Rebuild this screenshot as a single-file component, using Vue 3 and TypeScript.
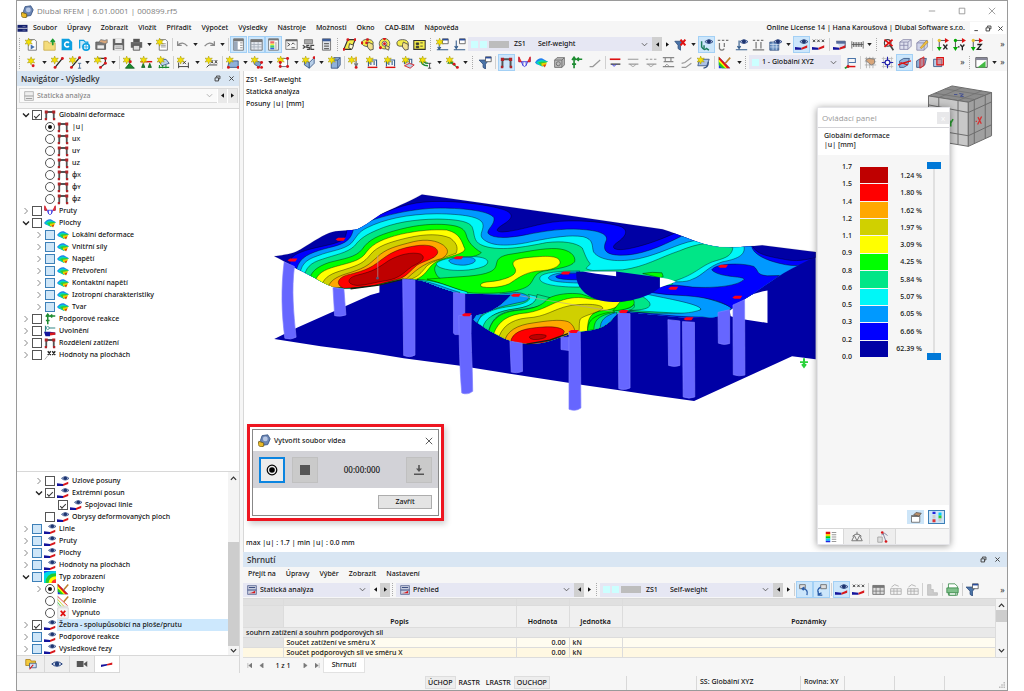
<script setup lang="ts">
import { ref } from 'vue'

interface Combo { label: string; icon?: string; chips?: boolean; code?: string; value: string; off?: string; steps: boolean }
interface Group { w: number; items: string }
interface Node { lv: number; arrow?: 'r' | 'd'; kind: 'check' | 'radio'; on?: boolean; part?: boolean; icon: string; text: string; sub?: string; sel?: boolean }

const star = '<path d="M4.500 0l1.200 3L9 2.500 7 5l2 2.500-3.300-.6L4.500 10 3.300 6.900 0 7.500 2 5 0 2.500 3.300 3z" fill="#f5e100" stroke="#8c8000" stroke-width=".5"/>'
const nodes = (pts: number[][]) => pts.map(([x, y]) => `<circle cx="${x}" cy="${y}" r="1.800" fill="#d8181c"/>`).join('')
const eye = '<path d="M6 4.500Q11 0 16 4.500 11 9 6 4.500z" fill="#b9c6e4" stroke="#24407c"/><circle cx="11" cy="4.300" r="2.400" fill="#1d3470"/>'
const ramp = '<path d="M0 14.500V11l8 1v2.500z" fill="#14149c"/><path d="M8 12l7-3v3l-7 2.500z" fill="#d8181c"/>'
const frame = '<path d="M3 14V4h10v10" fill="none" stroke="#555" stroke-width="2.400"/><path d="M1 2h4v4H1zM11 2h4v4h-4zM1 12h3v3H1zM12 12h3v3h-3z" fill="#b02428"/>'
const win = '<path d="M8 1h7v6H8z" fill="#fff" stroke="#555"/><path d="M8 1h7v2H8z" fill="#2a4d9c"/>'
const doc = '<path d="M4 2h8l2 2v11H4z" fill="#fff" stroke="#666"/>'
const hand = '<path d="M8 8l1-3 6 3v6l-4 1-3-4z" fill="#f3e08a" stroke="#444"/>'

const icons: Record<string, string> = {
  app: '<path d="M5 2l7-1 3 5-3 7-7 1-2-6z" fill="#6c86b5" stroke="#33507f"/><circle cx="9" cy="6" r="3" fill="#b7c7e3"/><path d="M1 9l6 2v4l-4 1-3-3z" fill="#e9b927" stroke="#6c5a1c"/>',
  flag: '<path d="M0 3h16v11H0z" fill="#14206c"/><path d="M0 8.500h16" stroke="#fff" stroke-width="1.200"/><path d="M8 5.500h5M8 11.500h5" stroke="#8890c0" />',
  new: doc + star + '<path d="M7 8l5 3-5 3z" fill="#4470b0"/>',
  open: '<path d="M1 4h5l1 2h8v9H1z" fill="#f4dc7c" stroke="#c9ab4c"/><path d="M12 9V3M9.500 5L12 2l2.500 3" stroke="#1d9b31" stroke-width="2" fill="none"/>',
  cdoc: '<path d="M2 1h9l4 4v10H2z" fill="#0c9fe0"/><path d="M11 6a3 3 0 1 0 0 4" stroke="#fff" stroke-width="2" fill="none"/>',
  cloud: '<path d="M2 13V3h5l2 2h3v3" fill="#c6e9f9" stroke="#0c9fe0" stroke-width="1.500"/><circle cx="10" cy="11" r="4" fill="#fff" stroke="#0c9fe0" stroke-width="2"/><path d="M6 11h8M10 7v8" stroke="#0c9fe0"/>',
  stamp: '<path d="M1 5h12v9H1z" fill="#777" stroke="#555"/><path d="M3 9h8v4H3z" fill="#eee"/><path d="M5 5l2-3 5 1 3-1v4l-3 1z" fill="#d9a679" stroke="#777"/>',
  save: '<path d="M1 1h14v14H1z" fill="#666"/><path d="M4 1h8v5H4zM3 9h10v6H3z" fill="#eee"/><path d="M4 11h8M4 13h8" stroke="#888"/>',
  print: '<path d="M4 1h8v4H4z" fill="#555"/><path d="M1 5h14v7H1z" fill="#666"/><path d="M4 9h8v6H4z" fill="#ddd" stroke="#444"/>',
  docstar: doc + '<path d="M6 7h6M6 9h6M6 11h6" stroke="#888"/>' + star,
  undo: '<path d="M2 4v5h5M2 9q6-6 12 1" fill="none" stroke="#8a8a8a" stroke-width="1.600"/>',
  redo: '<path d="M14 4v5H9M14 9Q8 3 2 10" fill="none" stroke="#8a8a8a" stroke-width="1.600"/>',
  pnl: '<path d="M2 1h12v14H2z" fill="#fff" stroke="#666"/><path d="M2 1h12v3H2z" fill="#777"/><path d="M2 4h5v11H2z" fill="#9aa8ba"/><path d="M10 6h3M10 9h3M10 12h3" stroke="#777"/>',
  tbl: '<path d="M1 2h14v13H1z" fill="#e4e8ee" stroke="#666"/><path d="M1 2h14v3H1z" fill="#777"/><path d="M1 8h14M1 11h14M5 5v10M10 5v10" stroke="#a4acb8"/>',
  leg: '<path d="M2 1h12v14H2z" fill="#fff" stroke="#666"/><path d="M2 1h12v2H2z" fill="#777"/><path d="M4 4h5v3H4z" fill="#e66"/><path d="M4 7h5v2H4z" fill="#ee4"/><path d="M4 9h5v3H4z" fill="#4c6"/><path d="M4 12h5v2H4z" fill="#36d"/><path d="M11 5v9" stroke="#888"/>',
  con: '<path d="M1 2h14v12H1z" fill="#f4f4f4" stroke="#666"/><path d="M1 2h14v2H1z" fill="#666"/><path d="M3 6l3 2-3 2M8 12h4M8 8l2-2 2 2" stroke="#333" fill="none"/>',
  sc: '<path d="M3 2h10v5H3z" fill="#aaa" stroke="#777"/><path d="M1 9l3 2-3 2M9 9H6v2.500h3V14H6M15 9h-4v5h4" stroke="#444" stroke-width="1.500" fill="none"/>',
  calc: '<path d="M3 1h10v14H3z" fill="#dfe3e8" stroke="#666"/><path d="M3 1h10v3H3z" fill="#3c5c98"/><path d="M5 7h6M5 10h6M5 13h6" stroke="#666" stroke-width="1.500"/>',
  y1: '<path d="M6 2h9l-5 12H1z" fill="#f4ec4a" stroke="#333" stroke-width="1.400"/><path d="M8 7l5 2-2 5-4-2z" fill="#fffbd0" stroke="#333"/>' + nodes([[6, 2], [15, 2], [1, 14]]),
  y2: '<ellipse cx="8" cy="6" rx="7" ry="4.500" fill="#f4ec4a" stroke="#444"/>' + nodes([[7, 6], [1, 6], [8, 2]]) + hand,
  y3: '<circle cx="8" cy="7" r="6.500" fill="#f4ec4a" stroke="#555"/><circle cx="8" cy="7" r="3" fill="#fff" stroke="#555"/>' + nodes([[8, 7], [8, 1], [3, 12]]) + '<path d="M9 9l5 2-1 4-4-2z" fill="#f3e08a" stroke="#444"/>',
  y4: '<path d="M1 6q1-4 7-4t7 4v4H4q-3 0-3-4z" fill="#f4ec4a" stroke="#444"/>' + hand,
  y5: '<path d="M1 3h14v11H1z" fill="#f4ec4a" stroke="#333" stroke-width="1.300"/><path d="M4 6h3v2H4zM9 6h3M9 10h3M4 10h3v2H4z" fill="#333" stroke="#333"/>',
  l1: '<path d="M1 14.500h14M4 5v9M2 11l2 3 2-3" stroke="#335c8c" fill="none" stroke-width="1.300"/>' + win + star,
  l2: '<path d="M1 14.500h14M4 3v10M2 10l2 3 2-3" stroke="#335c8c" fill="none" stroke-width="1.300"/>' + win,
  filtx: '<path d="M1 4h11L8 9v6l-3-2V9z" fill="#4a74a8" stroke="#33507f"/><path d="M8 2l6 7M14 2L8 9" stroke="#e01010" stroke-width="2.500"/>',
  filt: '<path d="M0 5h12L8 10v6l-3-2v-4z" fill="#4a74a8" stroke="#33507f"/>' + win,
  ld1: '<path d="M2 4v7q3 5 6 2l3 2M5 9v4" stroke="#1c7c5c" fill="none" stroke-width="1.800"/>' + eye,
  ld2: '<path d="M1 3h3M6 3h3M11 3h3M3 6v7q3 4 6 0M9 6v5" stroke="#777" fill="none" stroke-width="1.500"/>',
  ld3: '<path d="M1 14.500h14M5 3v10M3 10l2 3 2-3" stroke="#335c8c" fill="none" stroke-width="1.400"/>' + eye,
  ld4: '<path d="M1 3h3M6 3h3M11 3h3M1 14.500h14M5 5v8M11 5v8" stroke="#777" fill="none" stroke-width="1.500"/>',
  grid: '<path d="M1 5h11v10H1z" fill="#6b93c4" stroke="#33507f"/><path d="M1 8h11M1 11h11M5 5v10M9 5v10" stroke="#dbe8f6" stroke-width=".8"/>' + eye,
  eye: ramp + eye,
  xxx: '<path d="M1 2l3 3M4 2L1 5M6.500 2l3 3M9.500 2l-3 3M12 2l3 3M15 2l-3 3" stroke="#222"/>' + ramp,
  p1: '<path d="M4 4h11v8H9" fill="#cfdcf3" stroke="#335"/><path d="M4 4h11v3H4z" fill="#556a9a"/>' + ramp,
  p2: '<path d="M1 4v9M15 4v9M1 8h14M3 5v6M5 5v6M7 5v6M9 5v6M11 5v6M13 5v6" stroke="#555"/>',
  zoomx: '<circle cx="7" cy="6" r="4" fill="#fff" stroke="#444" stroke-width="1.500"/><path d="M10 9l4 6" stroke="#444" stroke-width="2"/><path d="M3 2l10 8M13 2L3 11" stroke="#e01010" stroke-width="2.200"/>',
  box: '<path d="M1 5l4-3h10v8l-4 4H1z" fill="#dfe1ef" stroke="#88a"/><path d="M1 5h10v9M11 5l4-3M6 5v9M1 9h10" stroke="#88a" fill="none"/>',
  pencil: '<path d="M1 6l4-3h9v8l-4 4H1z" fill="#cfd3ea" stroke="#88a"/><path d="M1 6h9v9M10 6l4-3" stroke="#88a" fill="none"/><path d="M5 12l8-9 2 2-8 8z" fill="#f0c040" stroke="#a67a10" stroke-width=".6"/>',
  ax: '<path d="M4 3h9M4 3v11" stroke="#333"/><path d="M11 0l5 3-5 3z" fill="#d11"/><path d="M1 11l3 5 3-5z" fill="#0a0"/><circle cx="4" cy="3" r="2" fill="#e8c030"/><path d="M9 8l5 6M14 8l-5 6" stroke="#222" stroke-width="1.600"/>',
  ay: '<path d="M3 3h10M3 3v11" stroke="#333"/><path d="M11 0l5 3-5 3z" fill="#d11"/><path d="M0 11l3 5 3-5z" fill="#0a0"/><circle cx="3" cy="3" r="2" fill="#0a0"/><path d="M6 11h2M9 8l2.500 3L14 8M11.500 11v4" stroke="#222" stroke-width="1.600" fill="none"/>',
  az: '<path d="M4 3h9M4 3v11" stroke="#333"/><path d="M11 0l5 3-5 3z" fill="#d11"/><path d="M1 11l3 5 3-5z" fill="#0a0"/><circle cx="4" cy="3" r="2" fill="#e8c030"/><path d="M9 8h5l-5 6h5" stroke="#222" stroke-width="1.600" fill="none"/>',
  star: '<g transform="translate(3 1)">' + star + '</g>' + nodes([[10, 12]]),
  line: '<path d="M5 14L14 3" stroke="#222" stroke-width="1.600"/>' + star + nodes([[5, 14], [14, 3]]),
  linei: '<path d="M3 14L13 2" stroke="#222" stroke-width="1.600"/><path d="M11 9h4M13 9v6M11 15h4" stroke="#335c8c" fill="none"/>' + star + nodes([[3, 14], [13, 2]]),
  poly: '<path d="M4 3h10v6L8 14" stroke="#333" fill="none" stroke-width="1.500"/>' + star + nodes([[14, 3], [14, 9], [8, 14]]),
  sup1: '<path d="M3 15l5-6 6 6z" fill="#1d8c31" stroke="#0d5c1c"/><path d="M8 3v6" stroke="#1d8c31" stroke-width="2"/>' + star + nodes([[9, 7]]),
  sup2: '<path d="M1 7h14" stroke="#d11" stroke-width="1.800"/><path d="M2 14l2-5 2 5zM10 14l2-5 2 5z" fill="#1d8c31" stroke="#0d5c1c"/>' + star,
  sup3: '<path d="M2 6l9-2 4 5-9 3z" fill="#bcd3ea" stroke="#33507f"/><path d="M2 14h13M3 11v4M7 11v4M11 11v4" stroke="#1d8c31" stroke-width="1.300"/>' + star,
  dim1: '<path d="M2 8v7M14 8v7M2 13h12" stroke="#222"/><path d="M7 6l4 4M11 6l-4 4" stroke="#222"/>' + star,
  dim2: '<path d="M2 14l3-3h10" stroke="#222" fill="none"/><path d="M7 5l3 4M10 5L7 9M12 5l3 4M15 5l-3 4" stroke="#222"/>' + star,
  surf1: '<path d="M4 6h11v8H2z" fill="#8fb1da" stroke="#33507f"/>' + star + nodes([[15, 14], [3, 14]]),
  surf2: '<path d="M3 5l10 3-3 6-6-4z" fill="#7ea2cf" stroke="#33507f"/>' + star + nodes([[13, 8], [9, 14], [13, 14]]),
  surf3: '<path d="M4 3h9v10H4z" fill="#fff" stroke="#556"/>' + star + nodes([[4, 13], [13, 3], [13, 13], [4, 8]]),
  surf4: '<path d="M3 5l6 3v7l-6-4z" fill="#8fb1da" stroke="#33507f"/><path d="M9 8l6-6v7l-6 6z" fill="#b7cfe9" stroke="#33507f"/>' + star + nodes([[15, 2]]),
  surf5: '<path d="M4 5l3-3h8v9l-3 4H4z" fill="#8fb1da" stroke="#33507f"/><path d="M4 5h8v10M12 5l3-3" fill="none" stroke="#33507f"/>' + star,
  fl: '<path d="M10 3v9M8 9l2 4 2-4" stroke="#777" fill="none" stroke-width="1.500"/><path d="M9 1h2v5H9z" fill="#e8b020"/>' + star + nodes([[10, 14]]),
  lm: '<path d="M3 13V5h10v8M6 6v5M10 6v5" stroke="#335c8c" fill="none" stroke-width="1.300"/><path d="M2 14h12" stroke="#d11" stroke-width="1.700"/>' + star,
  ls: '<path d="M3 10V4h9v6M6 5v4M9 5v4" stroke="#335c8c" fill="none" stroke-width="1.300"/><path d="M3 12l6-3 6 2-5 4z" fill="#b7cfe9" stroke="#d11"/>' + star,
  lg: '<path d="M2 3q0 9 9 9M4 3q1 6 7 6" stroke="#1d8c31" fill="none" stroke-width="1.800"/><path d="M11 9h4M13 9v6M11 15h4" stroke="#333" fill="none"/>' + star,
  ld: '<path d="M2 9h7l-3-4z" fill="#1d8c31" stroke="#1d8c31"/><path d="M7 9l7 5" stroke="#1d8c31" stroke-width="1.500"/>' + star + nodes([[10, 10], [14, 14]]),
  frame,
  mom: '<path d="M1 2v5h14V2M4 7q4 12 8 0M6 7v5M10 7v5" stroke="#33d" fill="none"/><path d="M1 1l3 6H1zM15 1l-3 6h3z" fill="#e05050" stroke="#d11"/>',
  surf: '<path d="M0 8Q4 2 9 3l7 4-3 1-4 5-4-2-3-1z" fill="#2080f0"/><path d="M1 8Q6 4 9 5l7 2-3 1-4 5-4-2z" fill="#00d8c0"/><path d="M4 8q5-2 12-1l-3 1-1 5-4-1z" fill="#3c3"/><path d="M8 9l7-1-3 5-4-1z" fill="#e8d000"/><path d="M10 11l4-1-2 4z" fill="#e04010"/>',
  cube: '<path d="M2 5l3-3h9v9l-3 3H2z" fill="#bbb" stroke="#666"/><path d="M2 5h9v9M11 5l3-3" stroke="#666" fill="none"/><circle cx="6.500" cy="9.500" r="2.500" fill="none" stroke="#666"/>',
  react: '<path d="M5 2v13M2.500 5L5 1.500 7.500 5M2.500 10h5M8 4h7M11 2L8.500 4 11 6" stroke="#1d8b31" stroke-width="2" fill="none"/>',
  thin: '<path d="M2 13h4l9-8" stroke="#999" stroke-width="1.500" fill="none"/>',
  r1: '<path d="M1 4h13" stroke="#d11" stroke-width="2"/><path d="M2 10h12" stroke="#333" stroke-width="1.500"/><path d="M4 10q2 5 5 0" stroke="#33d" fill="none"/>',
  r2: '<path d="M1 4h13M2 10h12" stroke="#999" stroke-width="1.500"/><path d="M4 10q3 6 7 0" stroke="#999" fill="none"/>',
  r3: '<path d="M1 4h3M6 4h3M11 4h3M2 10h12" stroke="#999" stroke-width="1.500"/><path d="M4 10q3 6 7 0" stroke="#999" fill="none"/>',
  r4: '<path d="M1 2h14M4 2v5M11 2v5M2 7h12M1 13h14" stroke="#888" stroke-width="1.400"/><path d="M3 13l3-3 3 3" stroke="#888" fill="none"/>',
  r5: '<path d="M2 9l4-1 8-6M2 14h5l7-5" stroke="#999" stroke-width="1.500" fill="none"/>',
  r6: '<path d="M3 4h12l-3 8H1z" fill="#aec3e6" stroke="#33507f"/><path d="M8 15q6-1 6-8" stroke="#33507f" fill="none" stroke-width="1.500"/>' + star,
  iso: '<path d="M1 1v14h14z" fill="#1c3ce0"/><path d="M1 1v10l4 4h5z" fill="#2c2"/><path d="M1 1v6l8 8h3z" fill="#ff0"/><path d="M1 1v3l10 11h4z" fill="#e01818"/><path d="M9 9l6-7" stroke="#b9802c" stroke-width="2"/>',
  isol: '<path d="M1 1v14h14" fill="#f7f7f7" stroke="#ccc"/><path d="M1 2l13 12" stroke="#e01818"/><path d="M1 6l8 9" stroke="#cc0"/><path d="M1 10l4 5" stroke="#2c2"/><path d="M9 9l6-7" stroke="#b9802c" stroke-width="2"/>',
  off: '<path d="M1 1h14v14H1z" fill="#f4f4f4" stroke="#ccc"/><path d="M5 5l6 7M11 5l-6 7" stroke="#e01010" stroke-width="2.500"/>',
  grad: '<path d="M0 0h16v16H0z" fill="#1c50f0"/><path d="M0 3Q4 0 16 0v16H0z" fill="#00d8e8"/><path d="M2 16Q2 3 16 3v13z" fill="#2c3"/><path d="M6 16Q7 7 16 7v9z" fill="#ff0"/><path d="M10 16q1-5 6-5v5z" fill="#f33"/>',
  csys: '<path d="M5 13V3h9v5H6" stroke="#4a74a8" fill="none" stroke-width="1.300"/><path d="M5 13h9" stroke="#d11" stroke-width="1.800"/><path d="M5 13l-4 2" stroke="#1d9b31" stroke-width="2"/>' + nodes([[5, 13]]),
  hand: '<path d="M1 3h14M1 7h14M1 11h14M3 1v14M7 1v14M11 1v14" stroke="#999" stroke-width=".8"/><path d="M2 5l4-2 7 1v5l-4 2-3-2z" fill="#d9a679" stroke="#777"/>',
  snap: '<path d="M1 3h14M1 13h14M3 1v14M13 1v14" stroke="#bbb"/><path d="M8 1v14M1 8h14" stroke="#22a" stroke-width="1.300"/><circle cx="8" cy="8" r="3" fill="#fff" stroke="#22a" stroke-width="1.500"/>',
  w1: '<path d="M2 6l5-3h7l-2 8-5 3H2z" fill="#8fb1da" stroke="#33507f"/><path d="M0 11l8-3 8-2M3 8l9 3" stroke="#d11" stroke-width="1.600"/>',
  w2: '<path d="M2 6l5-3h7l-2 8-5 3H2z" fill="#8fb1da" stroke="#33507f"/><path d="M6 4l5-3v11l-5 3z" fill="#d66" fill-opacity=".6" stroke="#d11"/>',
  w3: '<path d="M2 4h10v9H2z" fill="#b7cfe9" stroke="#33507f"/><path d="M6 2h8v9H6z" fill="#d66" fill-opacity=".5" stroke="#d11" stroke-width="1.400"/>',
  scr: '<path d="M1 2h14v12H1z" fill="#fff" stroke="#333"/><path d="M1 2h14v3H1z" fill="#889"/><path d="M3 14L13 6v8z" fill="#4b4"/>',
  tabl: '<path d="M1 3h14v11H1z" fill="#ddd" stroke="#666"/><path d="M1 3h14v3H1z" fill="#777"/><path d="M1 10h14M5 3v11M10 3v11" stroke="#777"/>',
  tin: '<path d="M2 7h13v7H2z" fill="#f4f4f4" stroke="#aaa"/><path d="M2 10h13M6 7v7M10 7v7M3 5l4-3 5 2" stroke="#aaa" fill="none"/>',
  stairs: '<path d="M2 2v13h12v-3H9V8H6V2z" fill="#ccc" stroke="#bbb"/>',
  prn: '<path d="M3 1h8l3 3v11H3z" fill="#fff" stroke="#3a8a4a"/><path d="M1 6h14v6H1z" fill="#7fc08a" stroke="#3a8a4a"/><path d="M4 12h8v3H4z" fill="#fff" stroke="#3a8a4a"/>',
  u1: '<path d="M2 2h7v5H2z" fill="#ddd" stroke="#666"/><path d="M6 7q7 1 5 8M7 9l-2-2 3-2" stroke="#2a5ca8" fill="none" stroke-width="1.600"/>',
  u2: '<path d="M7 2h7v5H7z" fill="#ddd" stroke="#666"/><path d="M7 5Q1 8 5 14l3-2M4 10v5h5" stroke="#2a5ca8" fill="none" stroke-width="1.600"/>',
  stat: '<path d="M1 1h14v14H1z" fill="#c9cfe0" stroke="#34467c"/><path d="M1 8h14M3 4h10" stroke="#34467c" stroke-width="1.500"/><path d="M3 13l5-1 5-3v4z" fill="#d8181c"/>',
  statg: '<path d="M1 1h14v14H1z" fill="#eee" stroke="#999"/><path d="M1 8h14M3 12h10" stroke="#999" stroke-width="1.500"/>',
  rel: '<path d="M2 1v8M4 4h11" stroke="#388" stroke-width="1.500"/><circle cx="5" cy="4" r="2" fill="#fff" stroke="#388"/><path d="M0 9h8l7 1v3L8 11v4H2z" fill="#14149c"/><path d="M8 10h7v3l-7 1z" fill="#d8181c"/>',
  vals: '<path d="M5 3l4 5M9 3L5 8M11 3l4 5M15 3l-4 5" stroke="#222" stroke-width="1.700"/><path d="M1 14l4-5" stroke="#999"/>',
  tabnav: '<path d="M1 2h6l1 2h6v6H1z" fill="#f3c93c" stroke="#a67a10"/><path d="M6 7h9v6H6z" fill="#cfe0f6" stroke="#33507f"/><path d="M6 15l5-6" stroke="#d11" stroke-width="1.500"/>',
  tabeye: '<path d="M1 8Q8 2 15 8 8 14 1 8z" fill="#dfe6f5" stroke="#24407c" stroke-width="1.300"/><circle cx="8" cy="8" r="3" fill="#24407c"/>',
  tabcam: '<path d="M1 4h9v8H1zM10 8l5-4v8z" fill="#555"/>',
  tabres: '<path d="M0 12V9l8-1v2z" fill="#14149c"/><path d="M8 8l7-2v3l-7 1z" fill="#d8181c"/>',
  list: '<path d="M1 1h6v3H1z" fill="#d11"/><path d="M1 4h6v3H1z" fill="#fc0"/><path d="M1 7h6v3H1z" fill="#0c0"/><path d="M1 10h6v3H1z" fill="#0cf"/><path d="M1 13h6v2H1z" fill="#22d"/><path d="M9 2h6M9 5h6M9 8h6M9 11h6M9 14h6" stroke="#999" stroke-width="1.600"/>',
  scale: '<path d="M8 1v4M2 7q6-6 12 0M4.500 6L1 13h7zM11.500 6L8 13h7z" fill="none" stroke="#777" stroke-width="1.300"/>',
  coef: '<path d="M1 8h6v7H1z" fill="#ddd" stroke="#999"/><path d="M8 3l4 11M6 5l4-2 4 3" stroke="#668" fill="none"/>' + nodes([[7, 2], [12, 14]]),
  pal1: '<path d="M2 6h11v9H2z" fill="#fff" stroke="#555"/><path d="M2 6h11v2H2z" fill="#777"/><path d="M5 5l3-3 7 1-3 4z" fill="#b98f6a" stroke="#555"/>',
  pal2: '<path d="M2 1h4v3H2z" fill="#22d"/><path d="M2 5h4v5H2z" fill="#ccc"/><path d="M2 11h4v4H2z" fill="#d33"/><path d="M10 2h4v4h-4z" fill="#0cf"/><path d="M10 6h4v4h-4z" fill="#3c3"/><path d="M10 10h4v4h-4z" fill="#ccc"/>',
}

const menus = ['Soubor', 'Úpravy', 'Zobrazit', 'Vložit', 'Přiřadit', 'Výpočet', 'Výsledky', 'Nástroje', 'Možnosti', 'Okno', 'CAD-BIM', 'Nápověda']
const subMenus = ['Přejít na', 'Úpravy', 'Výběr', 'Zobrazit', 'Nastavení']

const combos: Record<string, Combo> = {
  load: { label: 'Zatěžovací stav', chips: true, code: 'ZS1', value: 'Self-weight', off: 'prev', steps: true },
  cs: { label: 'Souřadný systém', chips: true, value: '1 - Globální XYZ', steps: false },
  stat: { label: 'Typ analýzy', icon: 'stat', value: 'Statická analýza', off: 'next', steps: true },
  view: { label: 'Tabulka', icon: 'stat', value: 'Přehled', off: 'prev', steps: true },
}

const bars: Record<string, Group[]> = {
  one: [
    { w: 157, items: ': new open cdoc cloud stamp save print v docstar |' },
    { w: 56, items: 'undo v redo v |' },
    { w: 105, items: '*pnl *tbl *leg con sc calc' },
    { w: 93, items: ': y1 y2 y3 y4 y5' },
    { w: 244, items: ': l1 l2 @load' },
    { w: 202, items: 'filtx v *ld1 ld2 ld3 ld4 grid v *eye xxx | p1 p2 v' },
    { w: 133, items: ': zoomx box pencil | ax ay az »' },
  ],
  two: [
    { w: 104, items: ': star v line linei v poly v |' },
    { w: 54, items: 'sup1 sup2 sup3 |' },
    { w: 49, items: 'dim1 v dim2 |' },
    { w: 122, items: 'surf1 v surf2 v surf3 v surf4 v surf5 |' },
    { w: 124, items: 'fl lm lm ls lg v ld v' },
    { w: 246, items: ': filt | *frame mom surf cube react thin | r1 r2 r3 r4 r5 r6 |' },
    { w: 27, items: 'iso v' },
    { w: 119, items: ': @cs csys |' },
    { w: 105, items: 'hand snap *w1 w2 w3 »' },
    { w: 40, items: ': scr v »' },
  ],
  sum: [
    { w: 147, items: '@stat' },
    { w: 204, items: ': @view' },
    { w: 202, items: ': @load |' },
    { w: 211, items: '*u1 *u2 | *eye xxx | tabl tin tin | stairs | prn | filt »' },
  ],
}

const kids = ['Lokální deformace', 'Vnitřní síly', 'Napětí', 'Přetvoření', 'Kontaktní napětí', 'Izotropní charakteristiky', 'Tvar']
const comps: string[][] = [['|u|', ''], ['u', 'X'], ['u', 'Y'], ['u', 'Z'], ['φ', 'X'], ['φ', 'Y'], ['φ', 'Z']]
const upper: Node[] = [
  { lv: 0, arrow: 'd', kind: 'check', on: true, icon: 'frame', text: 'Globální deformace' },
  ...comps.map(([text, sub], i): Node => ({ lv: 1, kind: 'radio', on: i === 0, icon: 'frame', text, sub })),
  { lv: 0, arrow: 'r', kind: 'check', icon: 'mom', text: 'Pruty' },
  { lv: 0, arrow: 'd', kind: 'check', icon: 'surf', text: 'Plochy' },
  ...kids.map((text): Node => ({ lv: 1, arrow: 'r', kind: 'check', part: true, icon: 'surf', text })),
  { lv: 0, arrow: 'r', kind: 'check', icon: 'react', text: 'Podporové reakce' },
  { lv: 0, arrow: 'r', kind: 'check', icon: 'rel', text: 'Uvolnění' },
  { lv: 0, arrow: 'r', kind: 'check', icon: 'frame', text: 'Rozdělení zatížení' },
  { lv: 0, arrow: 'r', kind: 'check', icon: 'vals', text: 'Hodnoty na plochách' },
]
const lower: Node[] = [
  { lv: 1, arrow: 'r', kind: 'check', icon: 'eye', text: 'Uzlové posuny' },
  { lv: 1, arrow: 'd', kind: 'check', on: true, icon: 'eye', text: 'Extrémní posun' },
  { lv: 2, kind: 'check', on: true, icon: 'eye', text: 'Spojovací linie' },
  { lv: 1, kind: 'check', icon: 'eye', text: 'Obrysy deformovaných ploch' },
  { lv: 0, arrow: 'r', kind: 'check', part: true, icon: 'eye', text: 'Linie' },
  { lv: 0, arrow: 'r', kind: 'check', part: true, icon: 'eye', text: 'Pruty' },
  { lv: 0, arrow: 'r', kind: 'check', part: true, icon: 'eye', text: 'Plochy' },
  { lv: 0, arrow: 'r', kind: 'check', part: true, icon: 'eye', text: 'Hodnoty na plochách' },
  { lv: 0, arrow: 'd', kind: 'check', part: true, icon: 'grad', text: 'Typ zobrazení' },
  { lv: 1, arrow: 'r', kind: 'radio', on: true, icon: 'iso', text: 'Izoplochy' },
  { lv: 1, kind: 'radio', icon: 'isol', text: 'Izolinie' },
  { lv: 1, kind: 'radio', icon: 'off', text: 'Vypnuto' },
  { lv: 0, arrow: 'r', kind: 'check', on: true, icon: 'eye', text: 'Žebra - spolupůsobící na ploše/prutu', sel: true },
  { lv: 0, arrow: 'r', kind: 'check', part: true, icon: 'eye', text: 'Podporové reakce' },
  { lv: 0, arrow: 'r', kind: 'check', part: true, icon: 'eye', text: 'Výsledkové řezy' },
]
const trees = ref([upper, lower])
const navTabs = ['tabnav', 'tabeye', 'tabcam', 'tabres']

const stops = ['1.7', '1.5', '1.4', '1.2', '1.1', '0.9', '0.8', '0.6', '0.5', '0.3', '0.2', '0.0']
const scale: [string, string][] = [
  ['#bf0000', '1.24 %'], ['#ff0000', '1.80 %'], ['#ffa800', '1.62 %'], ['#d0d000', '1.97 %'], ['#ffff00', '3.09 %'], ['#00ff00', '4.25 %'],
  ['#00e687', '5.84 %'], ['#00f7f7', '5.07 %'], ['#0099ff', '6.05 %'], ['#0000ff', '6.66 %'], ['#0000a5', '62.39 %'],
]

const N = '#0000a5', B = '#0000ff', A = '#0099ff', C = '#00f7f7', T = '#00e687', G = '#00ff00', Y = '#ffff00', O = '#d0d000', R = '#ffa800', D = '#ff0000', K = '#bf0000'

const roof = 'M40 231C80 226 100 222 120 210C160 185 190 165 215 158C240 152 270 155 290 150C320 135 345 115 360 105C400 85 440 70 485 45L870 100L1210 150C1260 165 1310 190 1350 198C1400 210 1460 202 1510 198L1671 218L1671 235L1655 240L1600 268C1540 300 1500 335 1460 358C1430 380 1400 405 1370 414C1320 424 1200 410 1090 397C1070 400 1060 425 1040 437C1015 455 980 455 960 459C930 462 890 482 850 492C800 500 770 492 750 485C710 470 670 445 640 422L650 409C700 400 730 375 755 346L620 344C570 340 530 320 490 306Q460 299 430 298L355 318L270 329C220 332 190 312 165 298C140 285 115 272 95 262C75 250 60 240 40 231Z'

const bands: [string, string][] = [
  [B, 'M88 262C84 240 96 228 118 220C160 202 210 200 240 185C256 178 258 165 260 140L360 105C420 78 470 65 540 66C620 66 700 80 735 92C765 105 755 118 735 132C712 146 700 157 728 158C780 155 840 130 900 126C970 121 1050 130 1085 142C1112 155 1095 175 1070 192C1050 208 1070 216 1110 208C1170 195 1210 178 1250 160L1400 180L1480 198C1490 226 1530 232 1580 241C1610 248 1640 242 1670 236L1500 520L88 520Z'],
  [A, 'M104 300C104 250 125 232 160 219C200 203 240 202 262 182C274 170 276 160 280 145L320 128C370 108 460 86 540 86C620 86 690 96 702 115C706 135 680 150 684 162C700 180 750 176 800 166C860 154 910 147 960 150C1020 153 1045 165 1041 182C1030 205 1030 226 1080 228C1140 230 1200 204 1268 170L1478 200C1482 225 1520 242 1560 252C1590 260 1610 260 1634 258L1500 520L104 520Z'],
  [C, 'M116 300C118 255 135 242 170 230C210 214 250 212 272 192C290 172 290 160 320 145C370 120 440 104 530 103C610 104 660 112 668 132C674 150 655 165 668 178C695 205 760 200 820 186C880 174 930 166 970 172C1004 180 996 200 1002 218C1020 245 1080 250 1140 238C1210 222 1250 195 1305 184L1455 200C1462 230 1430 240 1390 248C1345 262 1330 290 1300 300C1280 312 1240 308 1200 305L1100 520L116 520Z'],
  [T, 'M130 300C132 266 150 250 185 240C225 226 258 222 282 200C300 176 320 165 350 152C400 130 460 120 530 119C600 120 634 128 638 148C644 165 640 185 662 196C710 220 800 202 860 190C910 184 950 190 968 206C975 222 980 240 992 254C985 266 965 268 1000 274L1090 272C1160 262 1200 235 1260 215C1320 190 1350 192 1370 190L1422 205C1418 235 1390 238 1360 248C1320 264 1310 285 1245 306L1100 520L130 520Z'],
  [G, 'M147 300C150 278 170 262 205 250C250 238 285 235 305 210C325 180 355 168 400 155C460 138 500 134 545 135C600 138 612 148 618 165C624 190 640 205 664 220C650 236 600 236 555 242C525 252 520 265 525 278C532 298 545 302 560 306L500 320L147 330Z'],
  [G, 'M540 297C600 292 660 292 690 278C726 262 690 238 745 226C800 218 850 206 890 208C930 210 950 230 945 248C935 262 900 268 850 276C820 285 825 300 808 318C780 342 700 344 640 342C600 340 570 318 500 300Z'],
  [Y, 'M162 310C170 282 190 272 225 262C275 248 300 245 318 218C340 190 370 178 420 165C480 152 520 150 560 152C600 162 604 185 614 208C616 222 580 228 545 240C500 256 510 280 470 300L162 330Z'],
  [O, 'M183 320C190 292 215 282 250 272C300 256 310 250 330 226C350 200 390 188 440 176C500 162 540 164 570 176C596 195 592 212 588 222C560 232 520 245 500 260C480 285 475 290 455 299L183 330Z'],
  [R, 'M202 325C210 300 235 290 270 280C320 264 325 255 350 234C375 208 410 200 460 187C500 178 530 184 550 198C572 216 560 228 545 238C500 248 475 265 440 298L202 330Z'],
  [D, 'M250 328C220 315 232 292 270 285C330 270 340 258 365 240C400 212 440 202 480 198C520 195 536 210 532 222C525 240 490 245 470 258C450 275 440 290 420 298L330 322Z'],
  [K, 'M290 319C256 316 258 296 290 288C340 276 350 268 385 244C420 224 455 218 480 224C502 236 480 250 455 262C425 284 420 296 380 304C340 310 320 318 290 319Z'],
  [Y, 'M663 322C656 306 690 310 720 303C762 292 776 280 762 262C750 240 780 236 840 232C890 229 902 238 901 252C892 270 860 274 830 276C790 282 770 300 748 314C720 326 680 328 663 322Z'],
  [C, 'M528 254C540 236 600 232 640 232C690 234 692 252 670 262C635 276 580 276 556 270C540 266 530 262 528 254Z'],
  [A, 'M566 243C580 234 620 232 638 236C656 244 640 256 610 258C585 258 566 252 566 243Z'],
  [C, 'M470 300C540 306 560 322 620 338L625 346L560 342Z'],
  [A, 'M470 302C530 312 550 326 600 340L560 344Z'],
  [C, 'M840 300C838 284 870 276 960 275L960 324C900 324 845 318 840 300Z'],
  [A, 'M866 296C872 282 920 278 960 278L960 312C910 310 868 308 866 296Z'],
  [B, 'M888 292C894 284 930 282 960 282L960 302C920 302 890 300 888 292Z'],
  [A, 'M640 428L640 400L720 345L770 340C812 345 816 360 790 368C750 376 690 390 664 408L652 432Z'],
  [C, 'M652 436C656 404 700 390 745 383C800 375 820 362 805 346L832 352C830 380 790 386 750 392C700 400 680 420 672 446Z'],
  [T, 'M668 448C674 415 706 402 750 392C800 386 830 376 832 346L872 356C855 388 800 388 750 396C706 405 694 430 686 456Z'],
  [G, 'M684 470C690 425 715 402 765 395C830 390 850 376 865 358C890 345 930 340 965 345L1040 370L1120 362C1136 380 1110 392 1065 394L1060 440L960 470L684 480Z'],
  [Y, 'M697 480C705 440 730 412 780 404C840 400 860 380 900 366C930 355 960 352 990 360L1085 366C1085 384 1050 394 1020 396C985 404 984 430 984 460L700 500Z'],
  [O, 'M714 485C722 446 752 422 800 417C860 414 880 390 930 380C980 372 1030 376 1030 388C1015 402 975 408 962 420C955 440 965 455 950 470L714 500Z'],
  [R, 'M733 490C740 456 772 438 820 432C860 426 900 420 925 428C945 438 945 455 950 470L733 500Z'],
  [D, 'M752 490C756 462 785 450 830 446C880 440 910 446 914 458C910 480 870 484 830 500L752 500Z'],
  [K, 'M809 474C811 467 840 464 858 469C866 476 840 483 822 482C813 480 808 478 809 474Z'],
  [G, 'M984 455C986 425 998 408 1060 398L1064 445Z'],
  [T, 'M1003 455C1003 425 1015 410 1064 400L1066 440Z'],
  [A, 'M1022 450C1022 425 1035 410 1072 400L1066 440Z'],
  [T, 'M1110 362C1150 335 1180 335 1200 338C1250 345 1330 360 1360 395L1300 412L1090 398C1130 392 1135 380 1110 362Z'],
  [G, 'M1082 368L1122 362C1134 384 1100 392 1060 396Z'],
  [C, 'M1145 350C1190 330 1260 358 1300 370C1340 385 1330 404 1280 404L1110 394C1180 394 1190 375 1145 350Z'],
  [A, 'M1165 338C1220 325 1340 350 1420 385L1380 420L1300 424L1105 402C1220 400 1280 410 1325 392C1330 376 1220 358 1165 346Z'],
  [B, 'M1175 336C1220 310 1250 318 1300 324C1370 328 1440 320 1456 300C1450 290 1380 296 1358 272C1370 252 1450 250 1485 262C1502 276 1490 286 1525 290L1562 289L1500 345L1422 392C1400 370 1350 355 1280 350Q1220 348 1175 340Z'],
  [B, 'M1085 396C1180 402 1240 415 1330 414L1370 420L1085 420Z'],
  [G, 'M1150 283Q1180 277 1208 281L1212 292L1202 296Z'],
]

const pillars = [
  'M70 248C60 330 62 400 72 478Q90 484 106 475C98 400 92 330 101 262Z',
  'M217 325L250 330L256 408Q240 414 222 410Z', 'M427 300L464 303L464 529Q448 538 430 530Z',
  'M580 340L614 344L614 467L584 467L580 462Z', 'M596 410L634 408C630 480 638 560 638 638Q622 650 605 643C598 560 598 500 596 410Z',
  'M750 487L787 493L788 578Q770 585 754 580Z', 'M904 475L928 475L928 515L904 512Z', 'M928 458L962 458L964 688Q948 700 928 692Z',
  'M1076 402L1112 404L1112 628Q1096 636 1078 630Z', 'M1226 422L1262 426L1262 560Q1246 566 1228 560Z',
  'M1270 428L1306 430L1307 655Q1290 662 1272 655Z', 'M1377 400L1412 392L1412 494Q1396 500 1378 493Z', 'M1422 378L1457 362L1458 589Q1440 594 1423 588Z',
]
const pins = [[95, 243], [240, 180], [595, 236], [768, 349], [620, 408], [918, 282], [1392, 262], [1242, 328], [1435, 355], [1288, 420], [1092, 398], [942, 458]]

const rows = [['Součet zatížení ve směru X', '0.00', 'kN'], ['Součet podporových sil ve směru X', '0.00', 'kN']]
const toggles: [string, boolean][] = [['ÚCHOP', true], ['RASTR', false], ['LRASTR', false], ['OUCHOP', true]]
const split = (s: string) => s.split(' ')
const bare = (s: string) => s.replace('*', '')
</script>

<template>
  <div class="window">
    <header class="title">
      <svg class="ic" viewBox="0 0 16 16" v-html="icons.app" />
      <span class="name">Dlubal RFEM | 6.01.0001 | 000899.rf5</span>
      <button class="cap" aria-label="Minimalizovat"><svg viewBox="0 0 10 10"><path d="M1 5h8" /></svg></button>
      <button class="cap" aria-label="Maximalizovat"><svg viewBox="0 0 10 10"><path d="M1.500 1.500h7v7h-7z" /></svg></button>
      <button class="cap" aria-label="Zavřít okno"><svg viewBox="0 0 10 10"><path d="M1 1l8 8M9 1L1 9" /></svg></button>
    </header>
    <nav class="menu main">
      <svg class="flag" viewBox="0 0 16 16" v-html="icons.flag" />
      <button v-for="m in menus" :key="m">{{ m }}</button>
      <span class="lic">Online License 14 | Hana Karoušová | Dlubal Software s.r.o.</span>
      <button class="mdi" aria-label="Minimalizovat dokument"><svg viewBox="0 0 10 10"><path d="M2 8h5" /></svg></button>
      <button class="mdi" aria-label="Obnovit dokument"><svg viewBox="0 0 10 10"><path d="M3.500 3V1.500h5v4H7M1.500 4h5v4.500h-5z" /></svg></button>
      <button class="mdi" aria-label="Zavřít dokument"><svg viewBox="0 0 10 10"><path d="M2 2l6 6M8 2L2 8" /></svg></button>
    </nav>

    <div class="body">
      <template v-for="(bar, key) in bars" :key="key">
        <div class="bar" :class="'bar-' + key" role="toolbar">
          <div v-for="(g, gi) in bar" :key="gi" class="grp" :style="{ flexGrow: g.w }">
            <template v-for="(it, i) in split(g.items)" :key="i">
              <i v-if="it === ':'" class="grip" />
              <i v-else-if="it === '|'" class="sep" />
              <button v-else-if="it === 'v'" class="caret" aria-label="Další volby"><svg viewBox="0 0 6 4"><path d="M0 0h6L3 4z" /></svg></button>
              <button v-else-if="it === '»'" class="more" aria-label="Více">»</button>
              <div v-else-if="it[0] === '@'" class="combo" :class="{ single: it === '@cs' }">
                <svg v-if="combos[it.slice(1)].icon" class="ic" viewBox="0 0 16 16" v-html="icons.stat" />
                <template v-if="combos[it.slice(1)].chips"><i class="chip" /><i class="chip b" /><i class="chip g" /></template>
                <span v-if="combos[it.slice(1)].code" class="code">{{ combos[it.slice(1)].code }}</span>
                <select :aria-label="combos[it.slice(1)].label"><option>{{ combos[it.slice(1)].value }}</option></select>
                <svg class="chev" viewBox="0 0 8 5"><path d="M1 1l3 3 3-3" /></svg>
                <template v-if="combos[it.slice(1)].steps">
                  <button class="step" :class="{ off: combos[it.slice(1)].off === 'prev' }" aria-label="Předchozí"><svg viewBox="0 0 4 6"><path d="M4 0v6L0 3z" /></svg></button>
                  <button class="step" :class="{ off: combos[it.slice(1)].off === 'next' }" aria-label="Další"><svg viewBox="0 0 4 6"><path d="M0 0v6l4-3z" /></svg></button>
                </template>
              </div>
              <button v-else class="tb" :class="{ on: it[0] === '*' }" :aria-label="bare(it)"><svg class="ic" viewBox="0 0 16 16" v-html="icons[bare(it)]" /></button>
            </template>
          </div>
        </div>
      </template>

      <aside class="nav">
        <div class="dock">
          <h2>Navigátor - Výsledky</h2>
          <button aria-label="Uvolnit navigátor"><svg viewBox="0 0 10 10"><path d="M3.500 3V1.500h5v4H7M1.500 4h5v4.500h-5z" /></svg></button>
          <button aria-label="Zavřít navigátor"><svg viewBox="0 0 10 10"><path d="M2 2l6 6M8 2L2 8" /></svg></button>
        </div>
        <div class="navsel">
          <div class="combo gray">
            <svg class="ic" viewBox="0 0 16 16" v-html="icons.statg" />
            <select aria-label="Analýza navigátoru" disabled><option>Statická analýza</option></select>
            <svg class="chev" viewBox="0 0 8 5"><path d="M1 1l3 3 3-3" /></svg>
            <button class="step off" aria-label="Předchozí analýza"><svg viewBox="0 0 4 6"><path d="M4 0v6L0 3z" /></svg></button>
            <button class="step off" aria-label="Další analýza"><svg viewBox="0 0 4 6"><path d="M0 0v6l4-3z" /></svg></button>
          </div>
        </div>
        <div v-for="(tree, t) in trees" :key="t" class="tree" :class="t ? 'low' : 'up'">
          <ul>
            <li v-for="(n, i) in tree" :key="i" :class="['lv' + n.lv, { sel: n.sel }]">
              <span class="arr"><svg v-if="n.arrow" viewBox="0 0 8 8" :class="n.arrow"><path :d="n.arrow === 'd' ? 'M1 2.500l3 3 3-3' : 'M2.500 1l3 3-3 3'" /></svg></span>
              <label>
                <input v-if="n.kind === 'check'" type="checkbox" :checked="n.on" :class="{ part: n.part }" />
                <input v-else type="radio" :name="'tree' + t" :checked="n.on" />
                <svg class="ti" viewBox="0 0 16 16" v-html="icons[n.icon]" />
                <span>{{ n.text }}<small v-if="n.sub">{{ n.sub }}</small></span>
              </label>
            </li>
          </ul>
          <div v-if="t" class="vscroll"><svg viewBox="0 0 8 5"><path d="M1 4l3-3 3 3" /></svg><i /><svg viewBox="0 0 8 5"><path d="M1 1l3 3 3-3" /></svg></div>
        </div>
        <div class="navtabs">
          <button v-for="(n, i) in navTabs" :key="n" :class="{ on: i === 3 }" :aria-label="'Karta ' + (i + 1)"><svg class="ic" viewBox="0 0 16 16" v-html="icons[n]" /></button>
        </div>
      </aside>

      <main class="view">
        <svg class="scene" viewBox="243 71 764 483" preserveAspectRatio="xMinYMin meet">
          <defs><clipPath id="roof"><path :d="roof" /></clipPath></defs>
          <g transform="translate(260 180) scale(.33333)">
            <path :fill="N" d="M40 480L110 446L330 348L357 340L357 310L600 200L1671 218L1671 541L1600 532L1305 667L1180 650L1090 636L965 618L750 585L595 560L430 538L320 520L180 502Z" />
            <path fill="#fff" d="M1421 414L1421 380L1460 356Q1490 340 1526 334L1526 432L1462 422ZM1412 395L1422 388L1422 413L1415 412Z" />
            <path d="M430 302L620 200L1650 240L1460 358L1370 414L1090 397L640 422Z" :fill="N" />
            <path :d="roof" :fill="N" />
            <g clip-path="url(#roof)" stroke="#000" stroke-opacity=".6" stroke-width="2">
              <path v-for="(b, i) in bands" :key="i" :fill="b[0]" :d="b[1]" />
            </g>
            <path :fill="N" d="M950 278C945 330 990 368 1060 369C1130 368 1180 345 1202 325L1202 295L1070 277Z" />
            <path fill="#fff" d="M970 277L1070 277L1070 291L1010 284ZM1202 295Q1230 298 1250 308L1202 325Z" />
            <path :d="roof" fill="none" stroke="#223" stroke-opacity=".4" stroke-width="1" />
            <path d="M270 329L355 318L430 300M800 496L870 484L925 464" fill="none" stroke="#132013" stroke-width="4" />
            <path v-for="(p, i) in pillars" :key="i" :d="p" fill="#6666ff" stroke="#8080ff" stroke-width="2" />
            <path v-for="(p, i) in pins" :key="i" :d="`M${p[0] - 15} ${p[1]}l8-5h22l-6 9h-18z`" fill="#ff0018" />
            <path d="M352 228V297M780 350L1060 397" stroke="#b8a0a0" stroke-width="2" />
            <circle cx="351" cy="297" r="4" fill="#557" />
            <path d="M1636 538v26M1624 550h24M1630 556l6 8 6-8" stroke="#2bd13b" stroke-width="6" fill="none" />
          </g>
          <g transform="translate(800 80) scale(.33333)" stroke="#6c6c6c" stroke-width="3">
            <path fill="#8c8c8c" d="M391 48L462 18L581 38L511 67Z" />
            <path fill="#c8c8c8" d="M391 48L511 67L511 200L391 180Z" />
            <path fill="#a0a0a0" d="M511 67L581 38L581 168L511 200Z" />
            <path fill="none" d="M391 75L511 98L581 66M391 148L511 168L581 135M422 53V185M480 62V194M529 60V192M562 46V176" />
            <path fill="none" stroke-width="2" d="M410 40L530 59M440 27L560 46M422 53L492 23M480 62L551 33" />
            <path d="M452 118l6 12 7-12M458 130v10" stroke="#2b9b31" stroke-width="5" fill="none" />
            <path d="M540 112l10 20M551 110l-12 24M533 125h4" stroke="#d83030" stroke-width="4" fill="none" />
            <path d="M468 44h10M484 41l12 2-9 6 10 1" stroke="#445090" fill="none" />
          </g>
        </svg>
        <div class="info"><p>ZS1 - Self-weight</p><p>Statická analýza</p><p>Posuny |u| [mm]</p></div>
        <p class="minmax">max |u| : 1.7 | min |u| : 0.0 mm</p>

        <section class="video" role="dialog" aria-label="Vytvořit soubor videa">
          <div class="vbox">
            <div class="vhead"><svg class="ic" viewBox="0 0 16 16" v-html="icons.app" /><span>Vytvořit soubor videa</span><button aria-label="Zavřít dialog"><svg viewBox="0 0 10 10"><path d="M1 1l8 8M9 1L1 9" /></svg></button></div>
            <div class="vmid">
              <button class="rec" aria-label="Nahrávat"><svg viewBox="0 0 12 12"><circle cx="6" cy="6" r="4.800" fill="none" stroke="#000" stroke-width="1.200" /><circle cx="6" cy="6" r="2.800" /></svg></button>
              <button aria-label="Zastavit"><svg viewBox="0 0 12 12"><path fill="#555" d="M1 1h10v10H1z" /></svg></button>
              <time>00:00:000</time>
              <button aria-label="Uložit video"><svg viewBox="0 0 12 12"><path fill="#555" d="M5.200 1h1.600v3.500H9L6 8 3 4.500h2.200zM1 9.500h10V11H1z" /></svg></button>
            </div>
            <div class="vfoot"><button>Zavřít</button></div>
          </div>
        </section>

        <section class="panel">
          <div class="phead"><span>Ovládací panel</span><button aria-label="Zavřít panel">x</button></div>
          <div class="pname">Globální deformace<br />|u| [mm]</div>
          <div class="pscale">
            <div class="stops"><span v-for="s in stops" :key="s">{{ s }}</span></div>
            <div class="cols"><i v-for="s in scale" :key="s[0]" :style="{ background: s[0] }" /></div>
            <div class="pcts"><span v-for="s in scale" :key="s[0]">{{ s[1] }}</span></div>
            <div class="slide"><i /><i /></div>
          </div>
          <div class="pbtns"><button aria-label="Upravit paletu"><svg class="ic" viewBox="0 0 16 16" v-html="icons.pal1" /></button><button class="on" aria-label="Zobrazit stupnici"><svg class="ic" viewBox="0 0 16 16" v-html="icons.pal2" /></button></div>
          <div class="ptabs">
            <button class="on" aria-label="Barvy"><svg class="ic" viewBox="0 0 16 16" v-html="icons.list" /></button>
            <button aria-label="Součinitele"><svg class="ic" viewBox="0 0 16 16" v-html="icons.scale" /></button>
            <button aria-label="Filtr"><svg class="ic" viewBox="0 0 16 16" v-html="icons.coef" /></button>
          </div>
        </section>
      </main>

      <div class="dock sumhead">
        <h2>Shrnutí</h2>
        <button aria-label="Uvolnit shrnutí"><svg viewBox="0 0 10 10"><path d="M3.500 3V1.500h5v4H7M1.500 4h5v4.500h-5z" /></svg></button>
        <button aria-label="Zavřít shrnutí"><svg viewBox="0 0 10 10"><path d="M2 2l6 6M8 2L2 8" /></svg></button>
      </div>
      <nav class="menu sub"><button v-for="m in subMenus" :key="m">{{ m }}</button></nav>
      <div class="grid">
        <table>
          <colgroup><col class="c0" /><col class="c1" /><col class="c2" /><col class="c3" /><col /></colgroup>
          <thead>
            <tr class="strip"><td v-for="n in 5" :key="n" /></tr>
            <tr class="heads"><td /><th>Popis</th><th>Hodnota</th><th>Jednotka</th><th>Poznámky</th></tr>
          </thead>
          <tbody>
            <tr class="group"><td colspan="5">souhrn zatížení a souhrn podporových sil</td></tr>
            <tr v-for="r in rows" :key="r[0]"><td /><td>{{ r[0] }}</td><td class="num">{{ r[1] }}</td><td>{{ r[2] }}</td><td /></tr>
          </tbody>
        </table>
        <div class="vscroll short"><svg viewBox="0 0 8 5"><path d="M1 4l3-3 3 3" /></svg><i /><svg viewBox="0 0 8 5"><path d="M1 1l3 3 3-3" /></svg></div>
      </div>
      <div class="pager">
        <button aria-label="První"><svg viewBox="0 0 6 6"><path d="M1 0v6M6 0v6L2 3z" /></svg></button>
        <button aria-label="Zpět"><svg viewBox="0 0 6 6"><path d="M5 0v6L1 3z" /></svg></button>
        <span>1 z 1</span>
        <button aria-label="Vpřed"><svg viewBox="0 0 6 6"><path d="M1 0v6l4-3z" /></svg></button>
        <button aria-label="Poslední"><svg viewBox="0 0 6 6"><path d="M0 0v6l4-3zM5 0v6" /></svg></button>
        <button class="ptab">Shrnutí</button>
      </div>
    </div>

    <footer class="status">
      <button v-for="t in toggles" :key="t[0]" :class="{ on: t[1] }">{{ t[0] }}</button>
      <span class="s1" /><span class="s2">SS: Globální XYZ</span><span class="s3">Rovina: XY</span><span class="s4" /><span class="s4" /><span class="s4" />
      <svg viewBox="0 0 8 8"><path d="M6 0h2v2H6zM3 3h2v2H3zM6 3h2v2H6zM0 6h2v2H0zM3 6h2v2H3zM6 6h2v2H6z" /></svg>
    </footer>
  </div>
</template>

<style>
body { background: #fff; }
</style>
<style scoped>
.window { --line: #d8d8d8; box-sizing: border-box; min-height: 100vh; margin: 0 16px; border: 1px solid #9a9a9a; display: flex; flex-direction: column; background: #f6f6f6; color: #111; font: 500 7px/12px "Noto Sans", "Open Sans", sans-serif; }
.window *, .window *::before { box-sizing: border-box; }
button, select, input { font: inherit; color: inherit; margin: 0; padding: 0; border: 0; background: none; border-radius: 0; }
button { display: flex; align-items: center; justify-content: center; white-space: nowrap; }
svg { display: block; flex: none; }
i { display: block; flex: none; }
p, h2, ul { margin: 0; padding: 0; }
.ic { width: 13px; height: 13px; }

.title { height: 20px; background: #fff; display: flex; align-items: center; padding: 0 0 0 4px; color: #808080; font: 8px/12px "Open Sans", sans-serif; }
.title .name { margin: 0 auto 0 3px; }
.cap { width: 30px; height: 18px; }
.cap svg { width: 8px; height: 8px; fill: none; stroke: #8a8a8a; }

.menu { display: flex; align-items: center; }
.menu.main { height: 14px; }
.menu button { padding: 0 5px; }
.flag { width: 11px; height: 10px; margin-right: 0; }
.lic { margin-left: auto; margin-right: 5px; }
.menu .mdi { width: 12px; height: 12px; padding: 0; background: #fff; }
.menu .mdi:last-child { margin-right: 1px; }
.mdi svg, .dock svg { width: 7px; height: 7px; fill: none; stroke: #444; stroke-width: 1.4; }
.menu.sub { grid-area: submenu; height: 14px; }

.body { flex: 1; display: grid; grid-template: "one one one" 18px "two two two" 18px "nav gap view" 1fr "nav gap sumhead" 15px "nav gap submenu" 14px "nav gap sum" 17px "nav gap grid" 60px "nav gap pager" 15px / 223px 3px minmax(0, 1fr); }
.bar { display: flex; min-width: 0; overflow: hidden; }
.bar-one { grid-area: one; }
.bar-two { grid-area: two; }
.bar-sum { grid-area: sum; }
.grp { flex: 1 1 0; display: flex; align-items: center; justify-content: space-between; min-width: 0; }
.grip { width: 2px; height: 13px; margin: 0 2px; border-left: 1px dotted #aaa; }
.sep { width: 1px; height: 13px; margin: 0 1px; background: #d0d0d0; }
.tb { width: 17px; height: 17px; flex: none; }
.tb.on { background: #cce6fb; border: 1px solid #a3d0f5; }
.caret { width: 8px; height: 14px; flex: none; }
.caret svg { width: 5px; height: 3px; fill: #222; }
.more { width: 9px; font-size: 8px; color: #444; margin-left: auto; }
.combo { flex: 1 1 0; min-width: 0; display: flex; align-items: center; background: #e6e7f3; height: 14px; }
.combo .ic { width: 10px; height: 10px; margin: 0 0 0 4px; }
.chip { width: 7px; height: 7px; margin-left: 2px; background: #ccffff; }
.chip:first-child { margin-left: 3px; }
.chip.g { width: 20px; background: #bdbdbd; }
.code { width: 26px; padding-left: 5px; }
.single { margin-right: 1px; }
.single .chip.b, .single .chip.g { display: none; }
.combo select { flex: 1 1 0; min-width: 0; height: 14px; appearance: none; padding-left: 3px; outline: 0; opacity: 1; }
.chev { width: 7px; height: 5px; margin: 0 4px; fill: none; stroke: #555; }
.step { width: 10px; height: 14px; background: #f6f6f6; flex: none; }
.step.off { background: #d0d0d0; }
.step svg { width: 3px; height: 5px; fill: #111; }

.nav { grid-area: nav; display: flex; flex-direction: column; border-right: 1px solid var(--line); }
.dock { display: flex; align-items: center; height: 15px; background: #d9e6f3; padding: 0 1px 0 4px; }
.dock h2 { margin-right: auto; font: 600 8px/14px "Open Sans", sans-serif; color: #333; }
.dock button { width: 14px; height: 14px; }
.sumhead { grid-area: sumhead; padding-right: 3px; }
.navsel { padding: 2px 1px 5px 2px; }
.combo.gray { background: #fafafa; border: 1px solid #dadada; color: #888; height: 15px; }
.gray .chev { stroke: #aaa; }
.gray .step { background: #e9e9e9; border-left: 1px solid #fff; }
.tree { background: #fff; border-top: 1px solid var(--line); display: flex; }
.tree.up { flex: 1; }
.tree ul { flex: 1; list-style: none; }
.tree.low ul { padding-top: 3px; }
li { height: 12px; display: flex; align-items: center; padding-left: 2px; white-space: nowrap; }
li.lv1 { padding-left: 15px; }
li.lv2 { padding-left: 28px; }
li.sel { background: linear-gradient(90deg, #fff 40px, #cde8fd 40px); }
label { display: flex; align-items: center; }
.arr { width: 13px; }
.arr svg { width: 8px; height: 8px; margin: auto; fill: none; stroke: #888; }
.arr .d { stroke: #222; stroke-width: 1.4; }
input { appearance: none; width: 10px; height: 10px; border: 1px solid #555; background: #fff; display: grid; place-items: center; }
input[type="radio"] { border-radius: 50%; }
input[type="radio"]:checked::before { content: ""; width: 4px; height: 4px; border-radius: 50%; background: #111; }
input[type="checkbox"]:checked::before { content: ""; width: 6px; height: 3px; border: solid #333; border-width: 0 0 1px 1px; transform: rotate(-45deg); }
input.part { border-color: #3d80b8; background: #cfe6f8; }
.ti { width: 12px; height: 12px; margin: 0 3px 0 2px; }
li small { font-size: 6px; }
.vscroll { width: 11px; display: flex; flex-direction: column; align-items: center; background: #f4f4f4; padding: 4px 0 2px; }
.vscroll svg { width: 7px; height: 5px; fill: none; stroke: #333; stroke-width: 1.4; }
.vscroll i { width: 100%; background: #cdcdcd; height: 104px; margin: auto 0 2px; }
.vscroll.short { padding: 4px 0; }
.vscroll.short i { height: 12px; margin: 2px 0 auto; }
.navtabs { display: flex; height: 18px; border-top: 1px solid var(--line); }
.navtabs button { width: 25px; border: 1px solid var(--line); border-top: 0; border-left: 0; background: #efefef; }
.navtabs button:first-child { width: 28px; }
.navtabs .on { background: #fff; }
.navtabs .ic { width: 12px; height: 12px; }

.view { grid-area: view; position: relative; background: #fff; overflow: hidden; display: flex; flex-direction: column; justify-content: space-between; border-left: 1px solid var(--line); }
.scene { position: absolute; inset: 0; width: 100%; height: 100%; }
.info { position: relative; padding: 3px 2px; }
.info p { font-size: 7px; line-height: 12px; }
.minmax { position: relative; padding: 0 2px 3px; }

.video { position: absolute; left: 3px; bottom: 31px; width: 197px; border: 3px solid #ee1520; background: #fff; padding: 2px; box-shadow: 2px 3px 6px #0003; }
.vbox { border: 1px solid #888; height: 87px; display: flex; flex-direction: column; }
.vhead { height: 21px; display: flex; align-items: center; padding: 0 5px; }
.vhead span { margin: 0 auto 0 3px; }
.vhead button svg { width: 8px; height: 8px; fill: none; stroke: #333; }
.vmid { height: 37px; background: #d2d2d7; display: flex; align-items: center; padding: 0 6px; }
.vmid button { width: 26px; height: 26px; background: #cacaca; border: 1px solid #c0c0c0; }
.vmid button + button { margin-left: 7px; }
.vmid button.rec { background: #ececec; border: 2px solid #0a84e0; }
.vmid svg { width: 12px; height: 12px; }
.vmid time { margin: 0 auto; font-size: 8px; }
.vfoot { flex: 1; display: flex; align-items: center; justify-content: flex-end; padding: 0 6px; }
.vfoot button { width: 54px; height: 14px; background: #e4e4e4; border: 1px solid #adadad; }

.panel { position: absolute; right: 57px; top: 36px; width: 133px; height: 438px; background: #fff; box-shadow: 0 1px 7px #0006; display: flex; flex-direction: column; border: 1px solid #e4e4e8; }
.phead { height: 20px; display: flex; align-items: center; padding-left: 4px; border-bottom: 1px solid #d4d4d8; color: #999; font: 8px/12px "Open Sans", sans-serif; }
.phead span { margin-right: auto; }
.phead button { width: 12px; height: 12px; background: #e8e8ea; color: #fff; }
.pname { height: 27px; padding: 3px 6px; line-height: 9px; color: #222; }
.pscale { flex: 1; background: #f6f6f6; display: flex; align-items: flex-start; }
.stops, .cols, .pcts { display: flex; flex-direction: column; text-align: right; line-height: 17px; }
.stops { width: 34px; height: 207px; margin-top: 3px; justify-content: space-between; }
.stops span { height: 17px; }
.cols { width: 28px; margin: 12px 0 0 8px; gap: 1px; height: 190px; }
.cols i { flex: 1 1 0; }
.pcts { width: 34px; margin-top: 12px; height: 190px; justify-content: space-around; }
.slide { width: 14px; height: 198px; margin: 7px 0 0 5px; display: flex; flex-direction: column; justify-content: space-between; background: linear-gradient(90deg, #0000 6px, #e0e0e0 6px, #e0e0e0 8px, #0000 8px); }
.slide i { height: 7px; background: #0078d7; }
.pbtns { height: 23px; display: flex; align-items: center; justify-content: flex-end; gap: 4px; padding-right: 4px; }
.pbtns button { width: 17px; height: 14px; background: #cde5f8; }
.pbtns .on { border: 1px solid #3d80b8; }
.ptabs { height: 16px; display: flex; background: #f6f6f6; border-top: 1px solid var(--line); }
.ptabs button { width: 26px; background: #eee; border-right: 1px solid var(--line); }
.ptabs .on { background: #fff; }
.ptabs .ic, .pbtns .ic { width: 12px; height: 12px; }

.grid { grid-area: grid; display: flex; border: solid var(--line); border-width: 1px 0; }
table { flex: 1; border-collapse: collapse; table-layout: fixed; width: 100%; }
.c0 { width: 40px; }
.c1 { width: 233px; }
.c2, .c3 { width: 53px; }
td, th { padding: 0 3px; border: 1px solid #dcdcdc; border-width: 0 1px 1px 0; font-weight: 600; line-height: 9px; text-align: left; }
td { font-weight: 500; }
.strip td { height: 6px; padding: 0; background: #e0e0e0; line-height: 0; }
.heads td, .heads th { height: 22px; background: #f0f0f0; text-align: center; vertical-align: bottom; padding-bottom: 1px; }
.heads td:first-child, tbody tr td:first-child { background: #e3e3e3; }
tbody td { height: 10px; background: #fffcf0; }
tbody tr:last-child td { background: #fff8e2; }
tbody tr.group td:first-child { background: #e9e9e9; }
td.num { text-align: right; }
.pager { grid-area: pager; display: flex; align-items: center; }
.pager > button { width: 12px; height: 15px; }
.pager svg { width: 5px; height: 5px; fill: #777; stroke: #777; stroke-width: .5; }
.pager span { width: 32px; text-align: center; }
.pager .ptab { width: 42px; background: #fff; border: 1px solid #e2e2e2; border-top: 0; margin-left: 0; }

.status { height: 17px; display: flex; align-items: center; padding: 2px 0 0 408px; }
.status button { height: 13px; padding: 0 2px; border: 1px solid transparent; }
.status .on { background: #ededed; border-color: #ddd; }
.status span { height: 14px; border-left: 1px solid var(--line); padding-left: 3px; }
.status .s1 { margin-left: auto; width: 70px; }
.status .s2 { width: 104px; }
.status .s3 { width: 44px; }
.status .s4 { width: 50px; }
.status > svg { width: 6px; height: 6px; fill: #bbb; align-self: flex-end; margin: 0 2px 2px 5px; }
</style>
